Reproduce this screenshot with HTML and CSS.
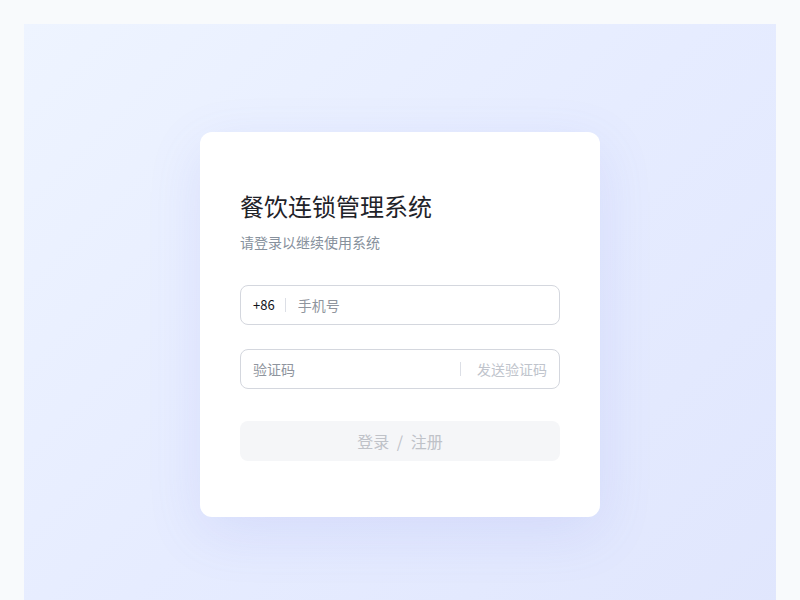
FILE: index.html
```html
<!DOCTYPE html>
<html lang="zh-CN">
<head>
<meta charset="utf-8">
<title>餐饮连锁管理系统</title>
<link rel="stylesheet" href="styles.css">
</head>
<body>
<main class="stage">
  <section class="card">
    <h1 class="title">餐饮连锁管理系统</h1>
    <p class="subtitle">请登录以继续使用系统</p>
    <form class="form">
      <label class="field">
        <span class="prefix">+86</span>
        <span class="divider"></span>
        <input class="input" type="text" placeholder="手机号">
      </label>
      <label class="field">
        <input class="input" type="text" placeholder="验证码">
        <span class="divider"></span>
        <span class="send">发送验证码</span>
      </label>
      <button class="submit" type="button">登录 / 注册</button>
    </form>
  </section>
</main>
</body>
</html>
```
FILE: styles.css
```css
* { box-sizing: border-box; }
html, body { margin: 0; }
body {
  padding: 24px;
  background: #f8fafc;
  font-family: "Noto Sans CJK SC", "Noto Sans", sans-serif;
}
.stage {
  min-height: 600px;
  display: flex;
  align-items: center;
  justify-content: center;
  background: linear-gradient(135deg, #eef4ff 0%, #e6ecff 50%, #e0e6fd 100%);
}
.card {
  width: 400px;
  background: #fff;
  border-radius: 12px;
  padding: 56px 40px 56px;
  box-shadow: 0 16px 56px rgba(99, 110, 220, 0.12);
}
.title {
  margin: 0;
  font-size: 24px;
  line-height: 36px;
  font-weight: 400;
  color: #1f2329;
}
.subtitle {
  margin: 7px 0 0;
  font-size: 14px;
  line-height: 22px;
  color: #86909c;
}
.form {
  margin-top: 32px;
  display: flex;
  flex-direction: column;
}
.field {
  height: 40px;
  border: 1px solid #d4d7de;
  border-radius: 8px;
  display: flex;
  align-items: center;
  padding: 0 12px;
  margin-bottom: 24px;
}
.field + .field { margin-bottom: 32px; }
.prefix {
  font-size: 13px;
  color: #111318;
}
.divider {
  width: 1px;
  height: 14px;
  background: #dcdfe6;
  margin: 0 12px 0 10px;
}
.field .input + .divider { margin: 0 16px 0 12px; }
.input {
  flex: 1;
  min-width: 0;
  border: 0;
  outline: 0;
  padding: 0;
  font-family: inherit;
  font-size: 14px;
  color: #1f2329;
  background: transparent;
}
.input::placeholder { color: #8f959e; }
.send {
  font-size: 14px;
  color: #c0c4cc;
}
.submit {
  height: 40px;
  border: 0;
  border-radius: 8px;
  background: #f5f6f8;
  color: #bfc2c8;
  font-family: inherit;
  font-size: 16px;
  word-spacing: 4px;
}
```
